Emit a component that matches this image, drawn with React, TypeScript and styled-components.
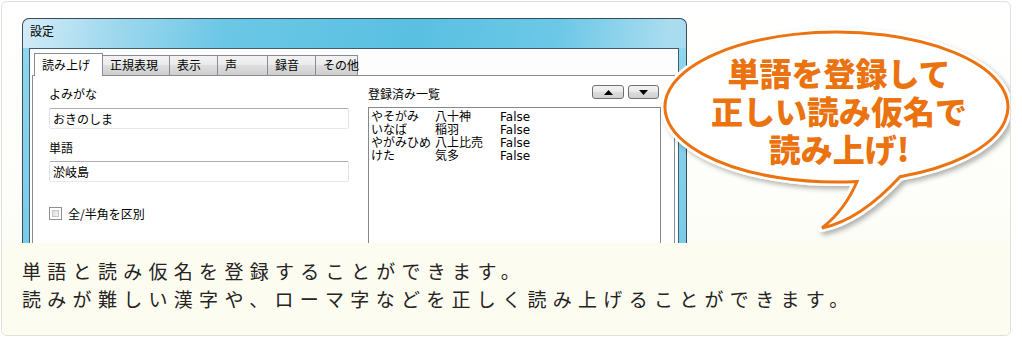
import React from 'react';
import styled, { createGlobalStyle } from 'styled-components';

const Global = createGlobalStyle`
  html, body { margin: 0; padding: 0; background: #ffffff; }
  body { font-family: "Noto Sans CJK JP", sans-serif; }
`;

const Card = styled.div`
  position: relative;
  box-sizing: border-box;
  margin: 1px 0 0 1px;
  width: 1010px;
  height: 335px;
  border: 1px solid #dfdfdc;
  border-radius: 6px;
  background: linear-gradient(180deg, #ffffff 0%, #fcfcf5 100%);
  overflow: hidden;
  display: flex;
  flex-direction: column;
`;

const Stage = styled.div`
  flex: none;
  height: 241px;
  box-sizing: border-box;
  padding: 16px 0 0 20px;
  overflow: hidden;
`;

const Caption = styled.div`
  flex: 1;
  background: #fcfcf1;
  padding: 14px 0 0 20px;
  font-family: "Noto Sans CJK JP", sans-serif;
  font-weight: 400;
  font-size: 19px;
  letter-spacing: 6.3px;
  line-height: 28px;
  color: #26221e;
`;

const Win = styled.div`
  flex: none;
  width: 665px;
  height: 320px;
  box-sizing: border-box;
  border: 1px solid #3a4b57;
  border-bottom: none;
  border-radius: 7px 7px 0 0;
  background: linear-gradient(100deg, #d3ecf7 0%, #a3d9ee 12%, #6cc7e6 28%, #59c0e2 55%, #6dc8e7 75%, #a9dcef 90%, #a2d9ee 100%);
  display: flex;
  flex-direction: column;
`;

const TitleBar = styled.div`
  flex: none;
  height: 29px;
  box-sizing: border-box;
  padding: 4px 0 0 7px;
  font-size: 12px;
  line-height: 16px;
  color: #000;
`;

const Frame = styled.div`
  flex: 1;
  display: flex;
  padding: 0 7px 0 6px;
  background: linear-gradient(180deg, #8fd5ee 0%, #6ec8e7 100%);
`;

const Client = styled.div`
  flex: 1;
  border: 1px solid #3f5d6d;
  border-bottom: none;
  background: #fdfdfd;
  padding: 4px 3px 0 2px;
  display: flex;
  flex-direction: column;
`;

const TabRow = styled.div`
  flex: none;
  display: flex;
  align-items: flex-end;
  height: 23px;
  padding-left: 2px;
  margin-bottom: -1px;
  position: relative;
  z-index: 1;
`;

const Tab = styled.div<{ $w: number; $active?: boolean }>`
  box-sizing: border-box;
  flex: none;
  width: ${(p) => p.$w}px;
  height: ${(p) => (p.$active ? 23 : 20)}px;
  margin-left: -1px;
  margin-bottom: ${(p) => (p.$active ? 0 : 1)}px;
  border: 1px solid #898c95;
  border-bottom: none;
  padding-left: 7px;
  font-size: 12px;
  line-height: ${(p) => (p.$active ? 22 : 18)}px;
  color: #000;
  white-space: nowrap;
  background: ${(p) =>
    p.$active
      ? '#ffffff'
      : 'linear-gradient(180deg, #f3f3f3 0%, #ebebeb 45%, #dddddd 50%, #cfcfcf 100%)'};
  &:first-child { margin-left: 0; }
`;

const Panel = styled.div`
  flex: 1;
  border: 1px solid #898c95;
  border-bottom: none;
  background: #ffffff;
  padding: 10px 0 0 16px;
  display: grid;
  grid-template-columns: 300px 293px;
  column-gap: 19px;
  align-items: start;
`;

const Column = styled.div`
  display: flex;
  flex-direction: column;
`;

const Label = styled.div<{ $mt?: number }>`
  flex: none;
  height: 16px;
  margin-top: ${(p) => p.$mt ?? 0}px;
  font-size: 12px;
  line-height: 16px;
  color: #000;
`;

const TextBox = styled.div<{ $mt: number }>`
  flex: none;
  box-sizing: border-box;
  height: 21px;
  margin-top: ${(p) => p.$mt}px;
  border: 1px solid #e2e3ea;
  border-top-color: #abadb3;
  border-bottom-color: #e3e9ef;
  border-radius: 2px;
  padding-left: 3px;
  font-size: 12px;
  line-height: 19px;
  color: #000;
  background: #fff;
`;

const CheckRow = styled.div`
  flex: none;
  display: flex;
  align-items: center;
  gap: 6px;
  margin-top: 24px;
  height: 14px;
  font-size: 12px;
  color: #000;
`;

const CheckBox = styled.span`
  width: 13px;
  height: 13px;
  box-sizing: border-box;
  border: 1px solid #8e8f8f;
  background: #fff;
  padding: 2px;
  display: flex;
  &::after {
    content: '';
    flex: 1;
    border: 1px solid #c4c6c9;
    background: linear-gradient(135deg, #dcdcdc 0%, #f4f4f4 100%);
  }
`;

const ListHeader = styled.div`
  flex: none;
  height: 16px;
  display: flex;
  justify-content: space-between;
  align-items: flex-start;
  padding-right: 2px;
  font-size: 12px;
  line-height: 16px;
  color: #000;
`;

const Buttons = styled.div`
  display: flex;
  gap: 4px;
  margin-top: -1px;
`;

const ArrowButton = styled.div<{ $w: number }>`
  box-sizing: border-box;
  width: ${(p) => p.$w}px;
  height: 14px;
  border: 1px solid #707070;
  border-radius: 3px;
  background: linear-gradient(180deg, #f2f2f2 0%, #ebebeb 45%, #dddddd 50%, #cfcfcf 100%);
  display: flex;
  align-items: center;
  justify-content: center;
`;

const ListBox = styled.div`
  flex: none;
  box-sizing: border-box;
  margin-top: 5px;
  height: 180px;
  border: 1px solid #828790;
  background: #fff;
  padding: 3px 0 0 2px;
  font-family: "DejaVu Sans", "Noto Sans CJK JP", sans-serif;
  font-size: 12px;
  line-height: 13px;
  color: #000;
`;

const ListRow = styled.div`
  display: grid;
  grid-template-columns: 64px 65px auto;
  white-space: nowrap;
`;

const Bubble = styled.svg`
  position: absolute;
  left: 653px;
  top: 23px;
  overflow: visible;
`;

const BubbleText = styled.div`
  position: absolute;
  left: 677px;
  top: 51px;
  width: 320px;
  text-align: center;
  font-family: "Noto Sans CJK JP", sans-serif;
  font-weight: 900;
  font-size: 32px;
  line-height: 38px;
  color: #ea730f;
  white-space: nowrap;
`;

const Line = styled.div``;

const tabs = [
  { t: '読み上げ', w: 69, active: true },
  { t: '正規表現', w: 68 },
  { t: '表示', w: 49 },
  { t: '声', w: 51 },
  { t: '録音', w: 49 },
  { t: 'その他', w: 43 },
];

const rows = [
  ['やそがみ', '八十神', 'False'],
  ['いなば', '稲羽', 'False'],
  ['やがみひめ', '八上比売', 'False'],
  ['けた', '気多', 'False'],
];

const bubblePath =
  'M245 151.7 A171.5 75 0 1 0 202 156.5 Q190 185 167 203 Q205 195 245 151.7 Z';

export default function App() {
  return (
    <>
      <Global />
      <Card>
        <Stage>
          <Win>
            <TitleBar>設定</TitleBar>
            <Frame>
              <Client>
                <TabRow>
                  {tabs.map((t) => (
                    <Tab key={t.t} $w={t.w} $active={t.active}>
                      {t.t}
                    </Tab>
                  ))}
                </TabRow>
                <Panel>
                  <Column>
                    <Label>よみがな</Label>
                    <TextBox $mt={6}>おきのしま</TextBox>
                    <Label $mt={11}>単語</Label>
                    <TextBox $mt={5}>淤岐島</TextBox>
                    <CheckRow>
                      <CheckBox />
                      <span>全/半角を区別</span>
                    </CheckRow>
                  </Column>
                  <Column>
                    <ListHeader>
                      <span>登録済み一覧</span>
                      <Buttons>
                        <ArrowButton $w={32}>
                          <svg width="9" height="5" viewBox="0 0 9 5">
                            <path d="M0 5 L4.5 0 L9 5 Z" fill="#000" />
                          </svg>
                        </ArrowButton>
                        <ArrowButton $w={31}>
                          <svg width="9" height="5" viewBox="0 0 9 5">
                            <path d="M0 0 L9 0 L4.5 5 Z" fill="#000" />
                          </svg>
                        </ArrowButton>
                      </Buttons>
                    </ListHeader>
                    <ListBox>
                      {rows.map((r) => (
                        <ListRow key={r[0]}>
                          <span>{r[0]}</span>
                          <span>{r[1]}</span>
                          <span>{r[2]}</span>
                        </ListRow>
                      ))}
                    </ListBox>
                  </Column>
                </Panel>
              </Client>
            </Frame>
          </Win>
        </Stage>
        <Caption>
          <Line>単語と読み仮名を登録することができます。</Line>
          <Line>読みが難しい漢字や、ローマ字などを正しく読み上げることができます。</Line>
        </Caption>
        <Bubble width="360" height="215" viewBox="0 0 360 215">
          <defs>
            <filter id="bubbleShadow" x="-10%" y="-10%" width="130%" height="140%">
              <feDropShadow dx="3" dy="3" stdDeviation="2.5" floodColor="#000" floodOpacity="0.3" />
            </filter>
          </defs>
          <path d={bubblePath} fill="#fff" stroke="#fff" strokeWidth={8} strokeLinejoin="round" filter="url(#bubbleShadow)" />
          <path d={bubblePath} fill="#fff" stroke="#ec7311" strokeWidth={3} />
        </Bubble>
        <BubbleText>
          <Line>単語を登録して</Line>
          <Line>正しい読み仮名で</Line>
          <Line>読み上げ!</Line>
        </BubbleText>
      </Card>
    </>
  );
}
